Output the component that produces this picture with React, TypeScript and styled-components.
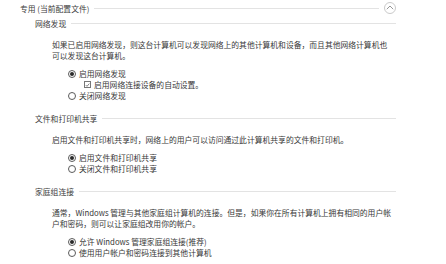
import React from "react";
import styled, { createGlobalStyle } from "styled-components";

const GlobalStyle = createGlobalStyle`
  html, body {
    margin: 0;
    padding: 0;
    background: #ffffff;
  }
  body {
    font-family: "Noto Sans CJK SC", "Noto Sans", sans-serif;
    font-size: 7.8px;
    color: #383838;
  }
`;

type Option = { label: string; checked?: boolean; kind?: "radio" | "check"; indent?: boolean };
type Group = { title: string; lines: string[]; options: Option[] };

const groups: Group[] = [
  {
    title: "网络发现",
    lines: [
      "如果已启用网络发现，则这台计算机可以发现网络上的其他计算机和设备，而且其他网络计算机也",
      "可以发现这台计算机。",
    ],
    options: [
      { label: "启用网络发现", checked: true },
      { label: "启用网络连接设备的自动设置。", checked: true, kind: "check", indent: true },
      { label: "关闭网络发现" },
    ],
  },
  {
    title: "文件和打印机共享",
    lines: ["启用文件和打印机共享时，网络上的用户可以访问通过此计算机共享的文件和打印机。"],
    options: [{ label: "启用文件和打印机共享", checked: true }, { label: "关闭文件和打印机共享" }],
  },
  {
    title: "家庭组连接",
    lines: [
      "通常，Windows 管理与其他家庭组计算机的连接。但是，如果你在所有计算机上拥有相同的用户帐",
      "户和密码，则可以让家庭组改用你的帐户。",
    ],
    options: [
      { label: "允许 Windows 管理家庭组连接(推荐)", checked: true },
      { label: "使用用户帐户和密码连接到其他计算机" },
    ],
  },
];

export default function App() {
  return (
    <>
      <GlobalStyle />
      <Page>
        <SectionHeader>
          <SectionTitle>专用 (当前配置文件)</SectionTitle>
          <Rule />
          <CollapseButton aria-label="collapse">
            <svg width="8" height="5" viewBox="0 0 8 5">
              <path d="M0.8 4.2 L4 1 L7.2 4.2" fill="none" stroke="#8a8a8a" strokeWidth="0.9" />
            </svg>
          </CollapseButton>
        </SectionHeader>
        <Body>
          {groups.map((g, i) => (
            <GroupBlock key={g.title} $first={i === 0}>
              <GroupHeader>
                <GroupTitle>{g.title}</GroupTitle>
                <Rule />
              </GroupHeader>
              <Desc>
                {g.lines.map((l) => (
                  <Line key={l}>{l}</Line>
                ))}
              </Desc>
              <Options>
                {g.options.map((o) => (
                  <OptionRow key={o.label} $indent={!!o.indent}>
                    {o.kind === "check" ? (
                      <CheckBox>
                        <svg width="6" height="6" viewBox="0 0 6 6">
                          <path d="M0.9 3.1 L2.4 4.6 L5.2 1.3" fill="none" stroke="#444" strokeWidth="0.8" />
                        </svg>
                      </CheckBox>
                    ) : (
                      <Radio $checked={!!o.checked} />
                    )}
                    <OptionLabel>{o.label}</OptionLabel>
                  </OptionRow>
                ))}
              </Options>
            </GroupBlock>
          ))}
        </Body>
      </Page>
    </>
  );
}

const Page = styled.div`
  width: 376px;
  padding-left: 20px;
`;

const SectionHeader = styled.div`
  display: flex;
  align-items: center;
  height: 16px;
`;

const SectionTitle = styled.span`
  white-space: nowrap;
  color: #3c3c3c;
`;

const Rule = styled.div`
  flex: 1;
  height: 1px;
  background: #e3e3e3;
  margin-left: 5px;
`;

const CollapseButton = styled.div`
  width: 12px;
  height: 12px;
  border: 1px solid #cacaca;
  border-radius: 50%;
  margin-left: 5px;
  display: flex;
  align-items: center;
  justify-content: center;
  box-sizing: border-box;
  padding-bottom: 1px;
`;

const Body = styled.div`
  padding-left: 15px;
`;

const GroupBlock = styled.div<{ $first: boolean }>`
  margin-top: ${(p) => (p.$first ? "0" : "10px")};
`;

const GroupHeader = styled.div`
  display: flex;
  align-items: center;
  height: 14px;
`;

const GroupTitle = styled.span`
  white-space: nowrap;
  color: #3c3c3c;
`;

const Desc = styled.div`
  margin-top: 9px;
  padding-left: 17px;
`;

const Line = styled.div`
  height: 11px;
  line-height: 11px;
  white-space: nowrap;
`;

const Options = styled.div`
  margin-top: 7px;
  padding-left: 33px;
`;

const OptionRow = styled.div<{ $indent: boolean }>`
  display: flex;
  align-items: center;
  height: 11px;
  padding-left: ${(p) => (p.$indent ? "16px" : "0")};
`;

const Radio = styled.span<{ $checked: boolean }>`
  width: 8px;
  height: 8px;
  border: 1px solid #5a5a5a;
  border-radius: 50%;
  box-sizing: border-box;
  margin-right: 3px;
  display: flex;
  align-items: center;
  justify-content: center;
  &::after {
    content: "";
    width: 4px;
    height: 4px;
    border-radius: 50%;
    background: ${(p) => (p.$checked ? "#2a2a2a" : "transparent")};
  }
`;

const CheckBox = styled.span`
  width: 7px;
  height: 7px;
  border: 1px solid #777;
  box-sizing: border-box;
  margin-right: 3px;
  display: flex;
  align-items: center;
  justify-content: center;
`;

const OptionLabel = styled.span`
  white-space: nowrap;
  line-height: 11px;
`;
